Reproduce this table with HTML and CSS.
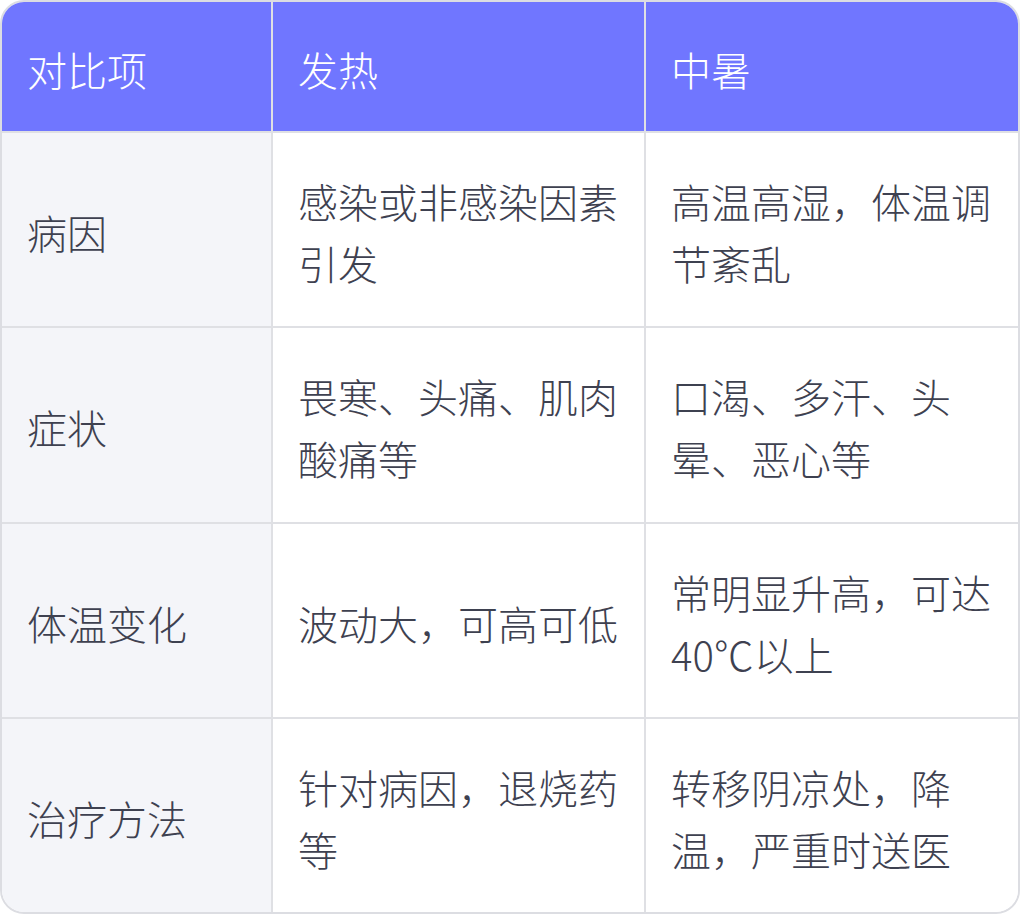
FILE: index.html
```html
<!DOCTYPE html>
<html lang="zh-CN">
<head>
<meta charset="utf-8">
<title>发热与中暑对比</title>
<link rel="stylesheet" href="styles.css">
</head>
<body>
<div class="wrap">
  <table class="cmp">
    <colgroup>
      <col class="c1">
      <col class="c2">
      <col class="c3">
    </colgroup>
    <thead>
      <tr>
        <th>对比项</th>
        <th>发热</th>
        <th>中暑</th>
      </tr>
    </thead>
    <tbody>
      <tr>
        <td class="item">病因</td>
        <td>感染或非感染因素引发</td>
        <td>高温高湿，体温调节紊乱</td>
      </tr>
      <tr>
        <td class="item">症状</td>
        <td>畏寒、头痛、肌肉酸痛等</td>
        <td>口渴、多汗、头晕、恶心等</td>
      </tr>
      <tr>
        <td class="item">体温变化</td>
        <td>波动大，可高可低</td>
        <td>常明显升高，可达40℃以上</td>
      </tr>
      <tr>
        <td class="item">治疗方法</td>
        <td>针对病因，退烧药等</td>
        <td>转移阴凉处，降温，严重时送医</td>
      </tr>
    </tbody>
  </table>
</div>
</body>
</html>
```

FILE: styles.css
```css
html, body {
  margin: 0;
  padding: 0;
  background: #ffffff;
}

.wrap {
  width: 1020px;
  height: 915px;
}

.cmp {
  width: 1020px;
  table-layout: fixed;
  border-collapse: separate;
  border-spacing: 0;
  border: 2px solid #dcdde2;
  border-radius: 24px;
  overflow: hidden;
  font-family: "Noto Sans CJK SC", "Noto Sans", sans-serif;
  font-weight: 300;
  font-size: 40px;
  line-height: 62px;
  color: #3e4150;
}

.c1 { width: 271px; }
.c2 { width: 373px; }
.c3 { width: auto; }

.cmp th,
.cmp td {
  text-align: left;
  vertical-align: middle;
  padding: 5px 24px 0 25px;
  border-right: 2px solid #dfe0e4;
  border-bottom: 2px solid #dfe0e4;
}

.cmp th:last-child,
.cmp td:last-child {
  border-right: none;
}

.cmp tbody tr:last-child td {
  border-bottom: none;
}

.cmp th {
  height: 124px;
  background: #7076ff;
  color: #ffffff;
  font-weight: 300;
}

.cmp td {
  height: 188.25px;
  background: #ffffff;
}

.cmp td.item {
  background: #f4f5f9;
}
```
